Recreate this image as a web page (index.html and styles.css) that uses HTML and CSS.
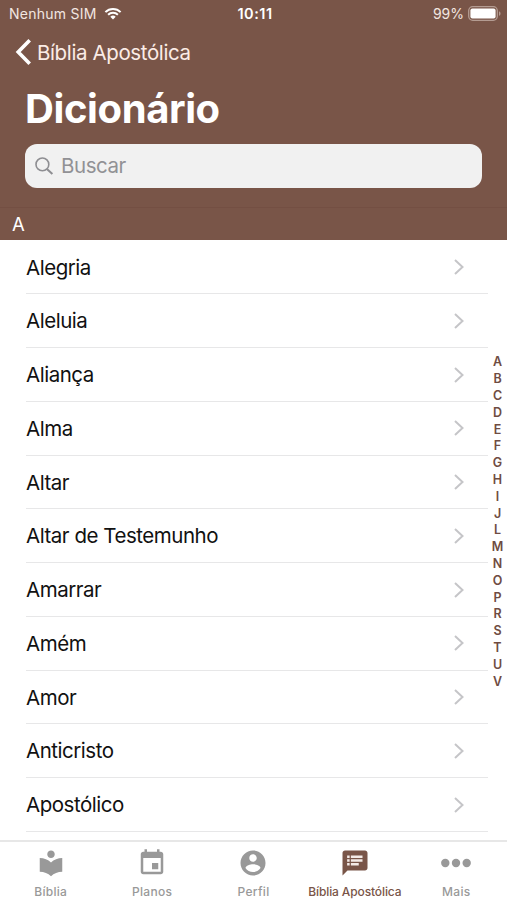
FILE: index.html
```html
<!DOCTYPE html>
<html lang="pt">
<head>
<meta charset="utf-8">
<title>Dicionário</title>
<link rel="stylesheet" href="styles.css">
</head>
<body>
<div class="app">
  <header class="header">
    <div class="status">
      <div class="carrier"><span class="carrier-name">Nenhum SIM</span>
        <svg class="wifi" viewBox="0 0 18 13" width="18" height="13" fill="none" stroke="#fff" stroke-width="2"><path d="M1.4 5.1a10.8 10.8 0 0 1 15.2 0M4.1 7.8a7 7 0 0 1 9.8 0"/><path d="M6.3 9.7a3.9 3.9 0 0 1 5.4 0L9 12.5z" fill="#fff" stroke="none"/></svg>
      </div>
      <span class="clock">10:11</span>
      <div class="power"><span class="percent">99%</span>
        <svg viewBox="0 0 33 15" width="33" height="15"><rect x=".7" y=".7" width="28.6" height="13.6" rx="4" fill="none" stroke="#b49c92" stroke-width="1.3"/><rect x="2.4" y="2.4" width="25.2" height="10.2" rx="2" fill="#fff"/><path d="M31 5.2c2 .8 2 3.8 0 4.6z" fill="#b49c92"/></svg>
      </div>
    </div>
    <div class="back">
      <svg viewBox="0 0 16 26" width="16" height="26" fill="none" stroke="#fff" stroke-width="3.6"><path d="M14.7 1.3 3.2 13l11.5 11.7"/></svg>
      <span class="back-label">Bíblia Apostólica</span>
    </div>
    <h1 class="title">Dicionário</h1>
    <div class="search">
      <svg viewBox="0 0 19 19" width="19" height="19" fill="none" stroke="#8e8e92" stroke-width="1.6"><circle cx="7.4" cy="7.4" r="6.4"/><path d="m11.9 11.9 5.5 5.2" stroke-width="2"/></svg>
      <span class="placeholder">Buscar</span>
    </div>
  </header>
  <div class="section">A</div>
  <main class="content">
    <ul class="list">
      <li class="row"><span>Alegria</span><svg class="chevron" viewBox="0 0 10 16"><path d="m1 1 7.5 7L1 15"/></svg></li>
      <li class="row"><span>Aleluia</span><svg class="chevron" viewBox="0 0 10 16"><path d="m1 1 7.5 7L1 15"/></svg></li>
      <li class="row"><span>Aliança</span><svg class="chevron" viewBox="0 0 10 16"><path d="m1 1 7.5 7L1 15"/></svg></li>
      <li class="row"><span>Alma</span><svg class="chevron" viewBox="0 0 10 16"><path d="m1 1 7.5 7L1 15"/></svg></li>
      <li class="row"><span>Altar</span><svg class="chevron" viewBox="0 0 10 16"><path d="m1 1 7.5 7L1 15"/></svg></li>
      <li class="row"><span>Altar de Testemunho</span><svg class="chevron" viewBox="0 0 10 16"><path d="m1 1 7.5 7L1 15"/></svg></li>
      <li class="row"><span>Amarrar</span><svg class="chevron" viewBox="0 0 10 16"><path d="m1 1 7.5 7L1 15"/></svg></li>
      <li class="row"><span>Amém</span><svg class="chevron" viewBox="0 0 10 16"><path d="m1 1 7.5 7L1 15"/></svg></li>
      <li class="row"><span>Amor</span><svg class="chevron" viewBox="0 0 10 16"><path d="m1 1 7.5 7L1 15"/></svg></li>
      <li class="row"><span>Anticristo</span><svg class="chevron" viewBox="0 0 10 16"><path d="m1 1 7.5 7L1 15"/></svg></li>
      <li class="row"><span>Apostólico</span><svg class="chevron" viewBox="0 0 10 16"><path d="m1 1 7.5 7L1 15"/></svg></li>
    </ul>
    <nav class="index">
      <span>A</span><span>B</span><span>C</span><span>D</span><span>E</span><span>F</span><span>G</span><span>H</span><span>I</span><span>J</span><span>L</span><span>M</span><span>N</span><span>O</span><span>P</span><span>R</span><span>S</span><span>T</span><span>U</span><span>V</span>
    </nav>
  </main>
  <footer class="tabs">
    <div class="tab"><svg viewBox="0 0 24 24"><path d="M12 11.55C9.64 9.35 6.48 8 3 8v11c3.48 0 6.64 1.35 9 3.55 2.36-2.19 5.52-3.55 9-3.55V8c-3.48 0-6.64 1.35-9 3.55zM12 8c1.66 0 3-1.34 3-3s-1.34-3-3-3-3 1.34-3 3 1.34 3 3 3z"/></svg><span>Bíblia</span></div>
    <div class="tab"><svg viewBox="0 0 24 24"><path d="M17 12h-5v5h5v-5zM16 1v2H8V1H6v2H5c-1.110 0-1.990.9-1.990 2L3 19c0 1.100.89 2 2 2h14c1.100 0 2-.9 2-2V5c0-1.100-.9-2-2-2h-1V1h-2zm3 18H5V8h14v11z"/></svg><span>Planos</span></div>
    <div class="tab"><svg viewBox="0 0 24 24"><path d="M12 2C6.480 2 2 6.480 2 12s4.480 10 10 10 10-4.480 10-10S17.520 2 12 2zm0 3c1.660 0 3 1.340 3 3s-1.340 3-3 3-3-1.340-3-3 1.340-3 3-3zm0 14.200c-2.500 0-4.710-1.280-6-3.220.03-1.990 4-3.080 6-3.080 1.990 0 5.970 1.090 6 3.080-1.290 1.940-3.500 3.220-6 3.220z"/></svg><span>Perfil</span></div>
    <div class="tab tab-active"><svg viewBox="0 0 24 24"><path d="M20 2H4c-1.100 0-1.990.9-1.990 2L2 22l4-4h14c1.100 0 2-.9 2-2V4c0-1.100-.9-2-2-2z"/><path class="lines" d="M5.700 6h2v2h-2zm0 3h2v2h-2zm0 3h2v2h-2zm3-6H18v2H8.700zm0 3H18v2H8.700zm0 3H15v2H8.700z"/></svg><span>Bíblia Apostólica</span></div>
    <div class="tab"><svg class="more" viewBox="0 0 30 30"><circle cx="4.300" cy="15" r="4.200"/><circle cx="15" cy="15" r="4.200"/><circle cx="25.700" cy="15" r="4.200"/></svg><span>Mais</span></div>
  </footer>
</div>
</body>
</html>
```

FILE: styles.css
```css
* { box-sizing: border-box; }
body { margin: 0; background: #fff; font-family: Inter, "Liberation Sans", sans-serif; }
svg { display: block; flex: none; }
.app { width: 507px; height: 900px; display: flex; flex-direction: column; overflow: hidden; }
.header { height: 207px; flex: none; background: #795548; color: #fff; }
.status { height: 27px; display: grid; grid-template-columns: 1fr auto 1fr; align-items: center; padding: 0 6px 0 9px; font-size: 14px; }
.carrier, .power { display: flex; align-items: center; color: #f2e6e0; }
.carrier { gap: 7px; }
.carrier-name { letter-spacing: 0.25px; }
.power { justify-content: flex-end; gap: 4px; }
.percent { letter-spacing: 0; }
.clock { font-weight: 600; font-size: 14.5px; letter-spacing: 0.5px; }
.back { height: 50px; display: flex; align-items: center; gap: 6px; padding-left: 15px; font-size: 20.5px; color: #fbece6; }
.back-label { letter-spacing: -0.38px; }
.title { margin: 0; padding-left: 25px; height: 64px; line-height: 64px; font-size: 40px; font-weight: 700; letter-spacing: -0.4px; }
.search { height: 44px; margin: 3px 25px 0; padding-left: 10px; display: flex; align-items: center; gap: 7px; border-radius: 12px; background: #f1f1f1; color: #919195; font-size: 20.5px; }
.placeholder { letter-spacing: -0.45px; padding-bottom: 2px; }
.section { height: 33px; flex: none; padding-left: 12px; line-height: 32px; background: #795548; border-top: 1px solid #744f43; color: #fff; font-size: 18.5px; }
.content { flex: 1; min-height: 0; display: flex; }
.list { list-style: none; margin: 0; padding: 0.7px 0 0 26px; width: 488px; }
.row { height: 53.75px; display: flex; align-items: center; justify-content: space-between; padding-right: 24px; border-bottom: 1px solid #e7e7e8; color: #111; font-size: 20.5px; letter-spacing: -0.47px; }
.chevron { width: 10px; height: 16px; fill: none; stroke: #c5c5c8; stroke-width: 2; }
.index { width: 19px; padding-top: 114.400px; display: flex; flex-direction: column; align-items: center; color: #6f4c42; font-size: 12.5px; font-weight: 600; line-height: 16.8px; }
.tabs { height: 60px; flex: none; display: grid; grid-template-columns: repeat(5, 1fr); border-top: 2px solid #e7e7e7; background: #fff; }
.tab { display: flex; flex-direction: column; align-items: center; padding-top: 6px; color: #999; font-size: 12px; font-weight: 500; letter-spacing: 0.3px; white-space: nowrap; }
.tab svg { width: 30px; height: 30px; fill: #999; }
.tab span { margin-top: 6px; line-height: 16px; }
.tab-active { color: #795548; letter-spacing: -0.12px; }
.tab-active svg { fill: #795548; }
.tab-active .lines { fill: #f4ebe7; }
```
